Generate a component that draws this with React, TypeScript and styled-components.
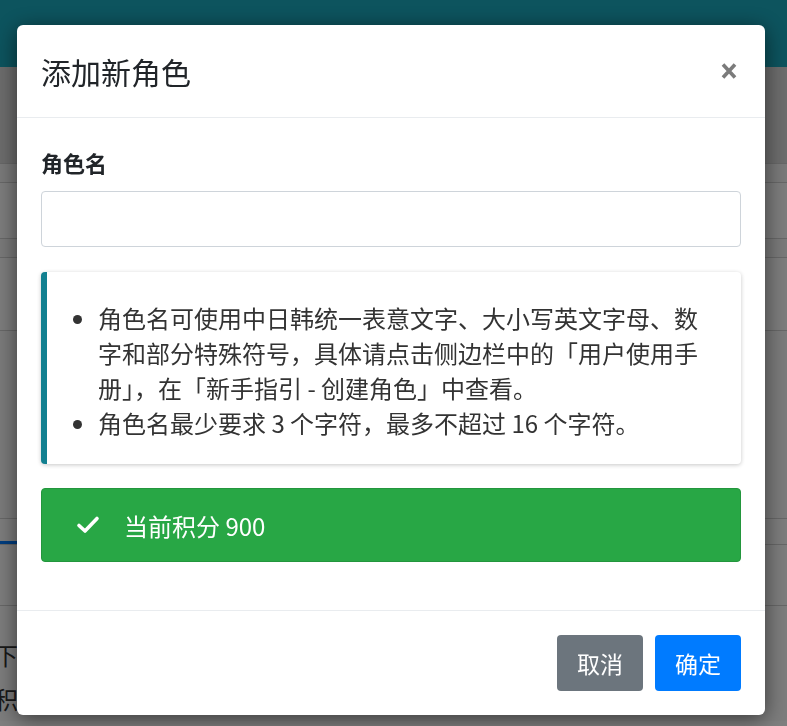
import React from "react";
import styled, { createGlobalStyle } from "styled-components";

const GlobalStyle = createGlobalStyle`
  html, body {
    margin: 0;
    padding: 0;
    height: 100%;
    overflow: hidden;
  }
  body {
    font-family: "Noto Sans CJK SC", "Noto Sans", sans-serif;
    color: #212529;
    background: #ffffff;
  }
  * {
    box-sizing: border-box;
  }
`;

const rules = [
  "角色名可使用中日韩统一表意文字、大小写英文字母、数字和部分特殊符号，具体请点击侧边栏中的「用户使用手册」，在「新手指引 - 创建角色」中查看。",
  "角色名最少要求 3 个字符，最多不超过 16 个字符。",
];

const CloseIcon = () => (
  <svg width="16" height="18" viewBox="0 0 16 18">
    <path d="M2 2.5 L14 15.5 M14 2.5 L2 15.5" stroke="currentColor" strokeWidth="3.6" strokeLinecap="butt" />
  </svg>
);

const CheckIcon = () => (
  <svg width="24" height="20" viewBox="0 0 24 20">
    <path d="M3 10.5 L9 16 L21 3.5" fill="none" stroke="#ffffff" strokeWidth="3.6" strokeLinecap="round" strokeLinejoin="round" />
  </svg>
);

export default function App() {
  return (
    <>
      <GlobalStyle />
      <SPage>
        <SNavbar />
        <STopBand />
        <SRow $height={19} $bg="#f4f4f4" />
        <SRow $height={56} />
        <SRow $height={19} $bg="#f4f4f4" />
        <SRow $height={73} />
        <SRow $height={188} $bg="#f7f7f7" />
        <STabs>
          <STabActive />
        </STabs>
        <SRow $height={61} />
        <SRow $height={28} />
        <SPageText>下面的内容</SPageText>
        <SPageText>积分说明</SPageText>
      </SPage>

      <SBackdrop />

      <SModalWrap>
        <SModal>
          <SHeader>
            <STitle>添加新角色</STitle>
            <SClose type="button" aria-label="Close">
              <CloseIcon />
            </SClose>
          </SHeader>

          <SBody>
            <SLabel htmlFor="role-name">角色名</SLabel>
            <SInput id="role-name" type="text" />

            <SCallout>
              <SRuleList>
                {rules.map((r) => (
                  <li key={r}>{r}</li>
                ))}
              </SRuleList>
            </SCallout>

            <SAlert>
              <CheckIcon />
              <span>当前积分 900</span>
            </SAlert>
          </SBody>

          <SFooter>
            <SButton $variant="secondary">取消</SButton>
            <SButton $variant="primary">确定</SButton>
          </SFooter>
        </SModal>
      </SModalWrap>
    </>
  );
}

const SPage = styled.div`
  display: flex;
  flex-direction: column;
  width: 100%;
`;

const SNavbar = styled.header`
  height: 67px;
  background-color: #1aa8bd;
`;

const STopBand = styled.div`
  height: 96px;
  background-color: #dadada;
`;

const SRow = styled.div<{ $height: number; $bg?: string }>`
  height: ${(p) => p.$height}px;
  background-color: ${(p) => p.$bg ?? "#fafafa"};
  border-top: 1px solid #cfcfcf;
`;

const STabs = styled.div`
  display: flex;
  align-items: flex-end;
  height: 26px;
  border-top: 1px solid #cfcfcf;
  background-color: #fafafa;
`;

const STabActive = styled.div`
  width: 180px;
  height: 3px;
  background-color: #007bff;
`;

const SPageText = styled.p`
  margin: 0 0 0 -6px;
  font-size: 24px;
  line-height: 44px;
  color: #333;
  background-color: #fafafa;
`;

const SBackdrop = styled.div`
  position: fixed;
  inset: 0;
  background-color: rgba(0, 0, 0, 0.5);
`;

const SModalWrap = styled.div`
  position: fixed;
  inset: 0;
  padding: 25px 0 0 17px;
`;

const SModal = styled.div`
  display: flex;
  flex-direction: column;
  width: 748px;
  background-color: #ffffff;
  border-radius: 6px;
  box-shadow: 0 4px 22px rgba(0, 0, 0, 0.55);
`;

const SHeader = styled.div`
  display: flex;
  align-items: center;
  justify-content: space-between;
  padding: 24px 28px 24px 24px;
  border-bottom: 1px solid #e9ecef;
`;

const STitle = styled.h5`
  margin: 0;
  font-size: 30px;
  font-weight: 400;
  line-height: 44px;
  color: #212529;
`;

const SClose = styled.button`
  display: flex;
  align-items: center;
  justify-content: center;
  padding: 0;
  border: none;
  background: transparent;
  color: #7b7b7b;
  cursor: pointer;
`;

const SBody = styled.div`
  display: flex;
  flex-direction: column;
  padding: 28px 24px 48px;
`;

const SLabel = styled.label`
  font-size: 22px;
  font-weight: 700;
  line-height: 33px;
  margin-bottom: 12px;
  color: #212529;
`;

const SInput = styled.input`
  height: 56px;
  padding: 0 16px;
  font-size: 22px;
  font-family: inherit;
  border: 1px solid #ced4da;
  border-radius: 4px;
  outline: none;
`;

const SCallout = styled.div`
  margin-top: 25px;
  padding: 28px 24px 24px 20px;
  border-left: 6px solid #128090;
  border-radius: 4px;
  background-color: #ffffff;
  box-shadow: 0 1px 4px rgba(0, 0, 0, 0.22);
`;

const SRuleList = styled.ul`
  margin: 0;
  padding-left: 31px;
  font-size: 24px;
  line-height: 35px;
  color: #333333;
`;

const SAlert = styled.div`
  display: flex;
  align-items: center;
  gap: 24px;
  margin-top: 24px;
  height: 74px;
  padding: 0 34px;
  font-size: 24px;
  color: #ffffff;
  background-color: #28a745;
  border: 1px solid #23963d;
  border-radius: 4px;
`;

const SFooter = styled.div`
  display: flex;
  justify-content: flex-end;
  gap: 12px;
  padding: 24px 24px 24px;
  border-top: 1px solid #e9ecef;
`;

const SButton = styled.button<{ $variant: "primary" | "secondary" }>`
  display: flex;
  align-items: center;
  justify-content: center;
  height: 56px;
  padding: 0 20px;
  font-family: inherit;
  font-size: 23px;
  color: #ffffff;
  border: none;
  border-radius: 4px;
  background-color: ${(p) => (p.$variant === "primary" ? "#007bff" : "#6c757d")};
  cursor: pointer;
`;
